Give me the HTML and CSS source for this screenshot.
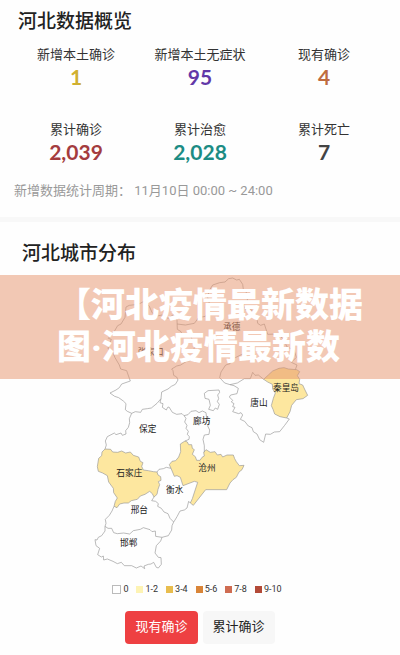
FILE: index.html
```html
<!DOCTYPE html>
<html lang="zh-CN">
<head>
<meta charset="utf-8">
<meta name="viewport" content="width=device-width, initial-scale=1">
<title>河北数据概览</title>
<link rel="stylesheet" href="styles.css">
</head>
<body>
<section class="overview">
  <h2 class="title">河北数据概览</h2>
  <dl class="stats">
    <div class="stat"><dt>新增本土确诊</dt><dd class="gold">1</dd></div>
    <div class="stat"><dt>新增本土无症状</dt><dd class="purple">95</dd></div>
    <div class="stat"><dt>现有确诊</dt><dd class="orange">4</dd></div>
    <div class="stat"><dt>累计确诊</dt><dd class="red">2,039</dd></div>
    <div class="stat"><dt>累计治愈</dt><dd class="teal">2,028</dd></div>
    <div class="stat"><dt>累计死亡</dt><dd class="dark">7</dd></div>
  </dl>
  <p class="period">新增数据统计周期： 11月10日 00:00 ~ 24:00</p>
</section>
<section class="cities">
  <h2 class="title">河北城市分布</h2>
  <div class="map-area">
    <svg class="map" viewBox="0 0 720 915" role="img" aria-label="河北城市分布">
      <g class="case">
        <path d="M75 522L92 523 98 531 113 532 125 528 137 534 151 531 160 541 176 546 181 559 189 563 185 574 190 585 205 587 220 590 231 591 234 600 242 605 243 616 235 620 239 629 234 643 231 658 222 666 217 656 209 649 195 658 181 663 172 673 154 677 145 684 132 684 119 687 111 698 102 694 106 679 112 669 101 653 100 640 86 621 82 602 68 594 55 589 52 575 56 550 65 542 66 531Z"/>
        <path d="M315 498L322 501 326 509 335 509 337 520 343 524 337 538 346 545 350 556 360 556 366 547 373 543 371 532 378 524 391 532 405 530 412 540 423 538 428 546 441 540 460 540 464 551 469 560 478 572 492 571 486 584 477 591 469 607 459 614 450 624 440 644 377 644 340 691 331 684 337 671 353 622 343 619 309 632 301 607 291 602 283 604 273 580 268 569 276 559 287 557 296 546 302 530 301 507Z"/>
        <path d="M551 313L565 300 578 288 597 280 612 278 625 282 650 284 659 290 652 302 659 313 657 326 668 330 675 345 683 361 669 371 649 374 635 391 630 410 620 429 600 425 584 417 579 403 574 392 580 370 586 354 578 342 577 328 563 321Z"/>
      </g>
      <g class="border">
        <path d="M118 270L122 282 140 287 148 310 151 318 125 327 118 338 108 345 90 354 104 364 116 368 130 378 138 386 136 404 142 409 155 415 166 410 182 412 187 403 202 401 214 399 231 385 243 371 245 351 264 342 274 334 286 328 294 315 290 306 281 301 279 287 275 282 290 273 302 270"/>
        <path d="M118 270L105 248 96 227 84 221 86 211 94 193 85 190 103 169 113 152 123 147 135 127 138 96 148 91 175 88 190 80 207 92 216 112 227 124 246 120 264 130 281 119 291 135 292 163 303 170 307 179 333 185 337 195 350 204 342 220 350 231 336 241 333 256 318 260 302 270"/>
        <path d="M291 147L316 150 343 145 356 128 376 124 390 110 388 85 383 68 387 48 398 30 419 23 435 21 446 11 458 9 470 15 478 13 488 28 490 43 503 57 502 76 490 90 498 107 512 103 530 120 533 145 542 151 553 147 563 178 593 177 611 193 621 216 642 224 649 247 634 262 651 270 646 284"/>
        <path d="M551 313L535 300 525 301 518 292 511 311 493 311 472 324 450 329 434 324 419 308 423 291 437 270 450 266 462 250 490 236 499 228"/>
        <path d="M450 329L462 332 475 340 471 356 452 360 448 366 458 376 454 381 462 386 458 395 465 397 458 410 476 416 483 413 488 420 481 433 494 439 505 453 516 458 520 470 531 477 539 494 551 502 557 477 571 478 583 471 599 470 614 451 628 432 620 429"/>
        <path d="M373 355L384 347 417 345 419 352 413 360 416 371 412 380 418 388 413 403 406 399 400 407 386 403 391 391 387 373 375 370Z"/>
        <path d="M243 371L240 383 249 386 247 397 259 405 263 397 267 396 277 412 290 418 306 416 312 422 324 419 333 409 348 407 357 413 367 408 378 413 380 430 388 440 383 453 389 465 387 478 373 480 369 493 373 512 373 532"/>
        <path d="M312 422L318 430 314 441 321 451 318 460 325 469 322 478 328 485 327 493 315 498"/>
        <path d="M155 415L148 431 149 443 145 457 137 467 138 477 127 481 123 474 108 479 103 474 82 485 76 498 79 510 75 522"/>
        <path d="M231 591L237 583 250 581 259 577 273 580"/>
        <path d="M222 666L215 677 227 679 235 686 233 694 244 700 252 711 264 716 270 730 281 741 285 735 291 725 300 708 313 705 321 699 326 679 331 684"/>
        <path d="M102 694L96 708 88 721 76 733 78 745 75 754 84 760 95 760 101 773 112 776 131 774 149 777 160 767 181 763 190 758 210 764 216 770 226 768 227 784 246 787 265 782 275 765 276 752 281 741"/>
        <path d="M75 754L75 768 65 782 55 787 51 795 45 794 48 812 59 820 53 839 64 846 70 843 71 855 82 852 99 859 112 866 124 862 133 872 155 872 169 879 183 873 194 881 192 873 205 868 213 867 221 862 229 877 235 879 244 868 243 848 235 847 225 834 229 812 242 798 246 787"/>
      </g>
      <g class="labels">
        <text x="455" y="164">承德</text>
        <text x="212" y="239">张家口</text>
        <text x="203" y="472">保定</text>
        <text x="365" y="447">廊坊</text>
        <text x="537" y="394">唐山</text>
        <text x="618" y="349">秦皇岛</text>
        <text x="148" y="604">石家庄</text>
        <text x="381" y="589">沧州</text>
        <text x="284" y="655">衡水</text>
        <text x="178" y="714">邢台</text>
        <text x="146" y="813">邯郸</text>
      </g>
    </svg>
    <p class="banner">【河北疫情最新数据<br>图·河北疫情最新数</p>
  </div>
  <ul class="legend">
    <li class="l0">0</li>
    <li class="l1">1-2</li>
    <li class="l2">3-4</li>
    <li class="l3">5-6</li>
    <li class="l4">7-8</li>
    <li class="l5">9-10</li>
  </ul>
  <div class="tabs">
    <button type="button" class="tab active">现有确诊</button>
    <button type="button" class="tab">累计确诊</button>
  </div>
</section>
</body>
</html>
```

FILE: styles.css
```css
* { box-sizing: border-box; margin: 0; padding: 0; }
body {
  background: #fefefe;
  color: #222;
  font-family: Roboto, "Noto Sans CJK SC", sans-serif;
}
.title { font-size: 19px; line-height: 28px; font-weight: 500; }
.overview { padding: 8px 14px 16px; border-bottom: 5px solid #f8f8f8; }
.overview .title { padding-left: 4px; }
.stats {
  display: grid;
  grid-template-columns: repeat(3, 1fr);
  row-gap: 31px;
  padding-top: 9px;
  text-align: center;
}
.stat dt { font-size: 13px; line-height: 20px; color: #333; }
.stat dd { font: bold 21px/24px Lato, sans-serif; }
.gold { color: #d0b030; }
.purple { color: #6238a8; }
.orange { color: #be6c40; }
.red { color: #a43c3e; }
.teal { color: #1c8c84; }
.dark { color: #444; }
.period { padding-top: 17px; font-size: 13px; line-height: 20px; color: #999; }
.cities { padding-top: 18px; }
.cities .title { padding-left: 22px; }
.map-area { position: relative; margin-top: 7px; }
.map { display: block; width: 60%; margin: 0 auto; }
.case { fill: #fde79f; }
.case path, .border { stroke: #999; stroke-width: 2; stroke-linejoin: round; }
.border { fill: none; }
.labels { font-size: 26px; text-anchor: middle; fill: #222; }
.banner {
  position: absolute;
  inset: 0 0 auto;
  padding: 9px 0 11px 57px;
  background: rgba(230, 146, 106, 0.5);
  color: #fff;
  font-size: 34px;
  line-height: 42px;
  font-weight: 900;
  white-space: nowrap;
}
.legend {
  display: flex;
  justify-content: center;
  gap: 8px;
  padding: 3px 6px 0 0;
  list-style: none;
  font-size: 9px;
  line-height: 12px;
  color: #333;
}
.legend li { display: flex; align-items: center; gap: 2px; }
.legend li::before { content: ""; width: 7px; height: 7px; background: #fff; }
.legend .l0::before { border: 1px solid #bbb; }
.legend .l1::before { background: #fdf3b4; }
.legend .l2::before { background: #e8bd4e; }
.legend .l3::before { background: #d98538; }
.legend .l4::before { background: #cf6c52; }
.legend .l5::before { background: #b34a38; }
.tabs { display: flex; justify-content: center; gap: 5px; padding: 16px 0 9px; }
.tab {
  padding: 6px 10px 7px;
  border: 0;
  border-radius: 4px;
  background: #f7f7f7;
  color: #222;
  font-family: inherit;
  font-size: 13px;
  line-height: 20px;
}
.tab.active { background: #ee4042; color: #fff; }
```
